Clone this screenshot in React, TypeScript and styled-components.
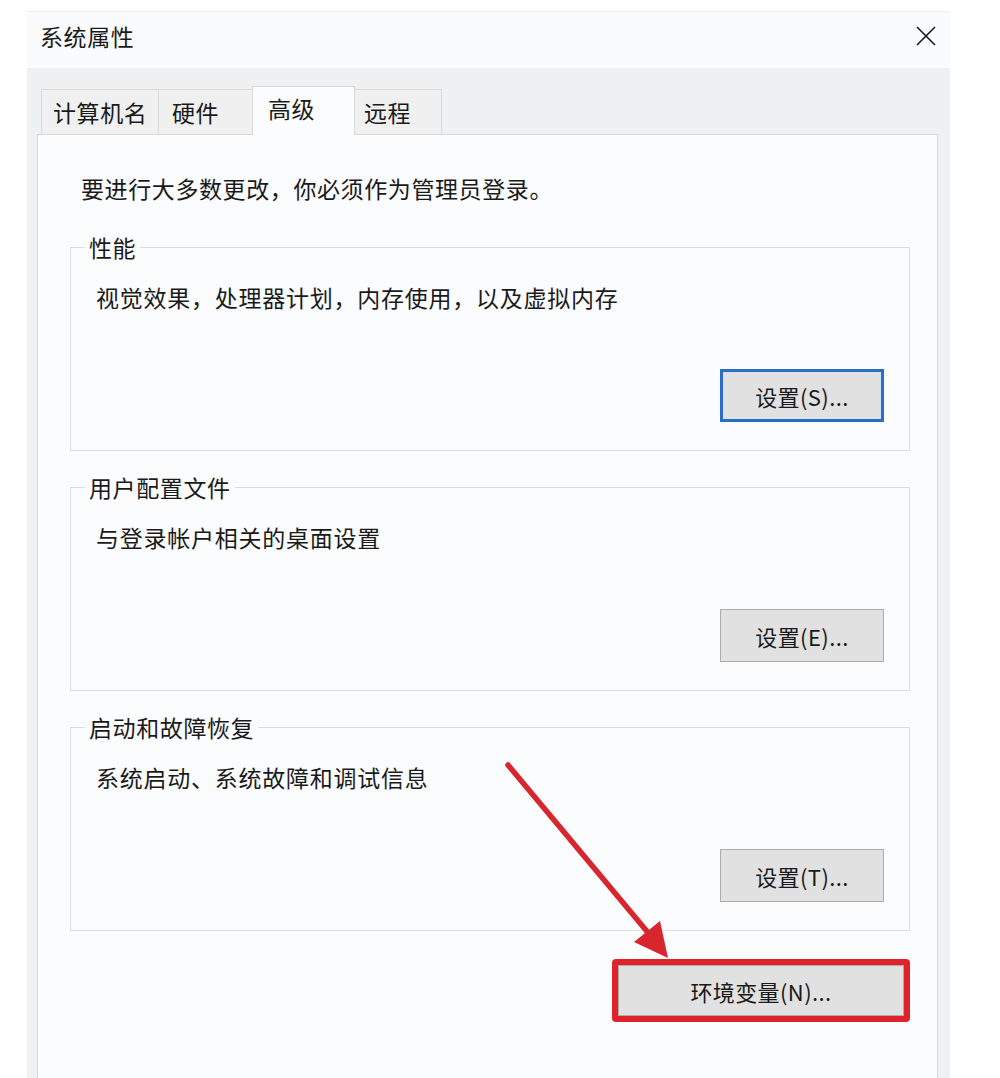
import styled, { createGlobalStyle } from "styled-components";

const GlobalStyle = createGlobalStyle`
  html, body {
    margin: 0;
    padding: 0;
    background: #ffffff;
    overflow: hidden;
  }
  body {
    font-family: "Noto Sans CJK SC", "Liberation Sans", sans-serif;
    color: #1a1a1a;
  }
`;

const tabs = [
  { label: "计算机名", width: 118, pad: 11 },
  { label: "硬件", width: 95, pad: 13 },
  { label: "高级", width: 103, pad: 15, active: true },
  { label: "远程", width: 88, pad: 9 },
];

const groups = [
  { title: "性能", text: "视觉效果，处理器计划，内存使用，以及虚拟内存", button: "设置(S)...", primary: true },
  { title: "用户配置文件", text: "与登录帐户相关的桌面设置", button: "设置(E)..." },
  { title: "启动和故障恢复", text: "系统启动、系统故障和调试信息", button: "设置(T)..." },
];

const App = () => {
  return (
    <>
      <GlobalStyle />
      <Window>
        <TitleBar>
          <Title>系统属性</Title>
          <CloseIcon width="20" height="20" viewBox="0 0 20 20">
            <path d="M1 1 L19 19 M19 1 L1 19" stroke="#1a1a1a" strokeWidth="1.6" fill="none" />
          </CloseIcon>
        </TitleBar>
        <Body>
          <TabRow>
            {tabs.map((t) => (
              <Tab key={t.label} $w={t.width} $pl={t.pad} $active={t.active}>
                {t.label}
              </Tab>
            ))}
          </TabRow>
          <Panel>
            <Intro>要进行大多数更改，你必须作为管理员登录。</Intro>
            <Groups>
              {groups.map((g) => (
                <Group key={g.title}>
                  <Legend>{g.title}</Legend>
                  <GroupBody>
                    <GroupText>{g.text}</GroupText>
                    <ButtonRow>
                      <Button $primary={g.primary}>{g.button}</Button>
                    </ButtonRow>
                  </GroupBody>
                </Group>
              ))}
            </Groups>
            <EnvRow>
              <Highlight>
                <EnvButton>环境变量(N)...</EnvButton>
              </Highlight>
            </EnvRow>
          </Panel>
        </Body>
        <Arrow width="200" height="220" viewBox="0 0 200 220">
          <line x1="18" y1="15" x2="160" y2="185" stroke="#d8262e" strokeWidth="5.5" strokeLinecap="round" />
          <polygon points="178,208 144,192 170,171" fill="#d8262e" />
        </Arrow>
      </Window>
    </>
  );
};

const Window = styled.div`
  position: relative;
  width: 923px;
  height: 1067px;
  margin: 11px 0 0 27px;
  display: flex;
  flex-direction: column;
  box-sizing: border-box;
  letter-spacing: 0.6px;
`;

const TitleBar = styled.div`
  height: 57px;
  box-sizing: border-box;
  border-top: 1px solid #ededed;
  background: #f9fbfc;
  display: flex;
  align-items: center;
  justify-content: space-between;
  padding: 0 14px 8px 13px;
`;

const Title = styled.span`
  font-size: 23px;
  line-height: 30px;
`;

const CloseIcon = styled.svg`
  display: block;
`;

const Body = styled.div`
  flex: 1;
  background: #eff0f1;
  padding: 18px 12px 0 10px;
  display: flex;
  flex-direction: column;
`;

const TabRow = styled.div`
  height: 49px;
  display: flex;
  align-items: flex-end;
  padding-left: 4px;
  margin-bottom: -1px;
  position: relative;
  z-index: 1;
`;

const Tab = styled.div<{ $w: number; $pl: number; $active?: boolean }>`
  box-sizing: border-box;
  width: ${(p) => p.$w}px;
  height: ${(p) => (p.$active ? 49 : 46)}px;
  padding-left: ${(p) => p.$pl}px;
  padding-bottom: ${(p) => (p.$active ? 6 : 0)}px;
  margin-left: -1px;
  display: flex;
  align-items: center;
  font-size: 23px;
  background: ${(p) => (p.$active ? "#fbfcfd" : "#f0f0f0")};
  border: 1px solid #d9d9d9;
  border-bottom: ${(p) => (p.$active ? "none" : "1px solid #d9d9d9")};
  position: relative;
  z-index: ${(p) => (p.$active ? 2 : 1)};

  &:first-child {
    margin-left: 0;
  }
`;

const Panel = styled.div`
  flex: 1;
  background: #fbfcfd;
  border: 1px solid #d9d9d9;
  border-bottom: none;
  padding: 38px 27px 0 32px;
`;

const Intro = styled.div`
  font-size: 23px;
  line-height: 30px;
  padding-left: 11px;
  margin-bottom: 29px;
`;

const Groups = styled.div`
  display: flex;
  flex-direction: column;
  gap: 21px;
`;

const Group = styled.fieldset`
  margin: 0;
  padding: 0;
  min-width: 0;
  border: 1px solid #dcdcdc;
`;

const Legend = styled.legend`
  margin-left: 14px;
  padding: 0 4px;
  font-size: 23px;
  line-height: 30px;
`;

const GroupBody = styled.div`
  padding: 20px 25px 28px 25px;
`;

const GroupText = styled.div`
  font-size: 23px;
  line-height: 30px;
  letter-spacing: 0.75px;
`;

const ButtonRow = styled.div`
  margin-top: 57px;
  display: flex;
  justify-content: flex-end;
`;

const Button = styled.button<{ $primary?: boolean }>`
  box-sizing: border-box;
  width: 164px;
  height: 53px;
  font-family: inherit;
  font-size: 22px;
  letter-spacing: 0.4px;
  color: #1a1a1a;
  background: #e1e1e1;
  border: ${(p) => (p.$primary ? "3px solid #2c6ec2" : "1px solid #adadad")};
  box-shadow: ${(p) => (p.$primary ? "inset 0 0 0 1px #cfe3f6" : "none")};
  padding: 0;
`;

const EnvRow = styled.div`
  margin-top: 28px;
  display: flex;
  justify-content: flex-end;
`;

const Highlight = styled.div`
  display: flex;
  border: 6px solid #e0232b;
  border-radius: 4px;
`;

const EnvButton = styled.button`
  box-sizing: border-box;
  width: 286px;
  height: 51px;
  font-family: inherit;
  font-size: 22px;
  letter-spacing: 0.4px;
  color: #1a1a1a;
  background: #e1e1e1;
  border: 1px solid #adadad;
  padding: 0;
`;

const Arrow = styled.svg`
  position: absolute;
  left: 463px;
  top: 739px;
  pointer-events: none;
  z-index: 3;
`;

export default App;
